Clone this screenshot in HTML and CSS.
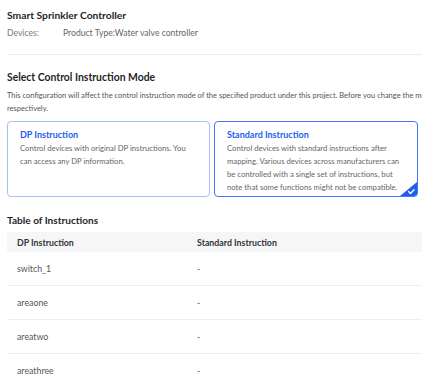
FILE: index.html
```html
<!DOCTYPE html>
<html lang="en">
<head>
<meta charset="utf-8">
<title>Smart Sprinkler Controller</title>
<link rel="stylesheet" href="styles.css">
</head>
<body>
<div class="page">
  <header class="head">
    <h1 class="title">Smart Sprinkler Controller</h1>
    <div class="meta">
      <span class="meta-label">Devices:</span>
      <span class="meta-value">Product Type:Water valve controller</span>
    </div>
  </header>

  <section class="mode">
    <h2 class="section-title">Select Control Instruction Mode</h2>
    <p class="desc"><span class="desc-line">This configuration will affect the control instruction mode of the specified product under this project. Before you change the mode, make sure to update the related configurations</span><br>respectively.</p>
    <div class="cards">
      <div class="card">
        <div class="card-title">DP Instruction</div>
        <div class="card-text">Control devices with original DP instructions. You can access any DP information.</div>
      </div>
      <div class="card card-active">
        <div class="card-title">Standard Instruction</div>
        <div class="card-text">Control devices with standard instructions after mapping. Various devices across manufacturers can be controlled with a single set of instructions, but note that some functions might not be compatible.</div>
        <svg class="corner" width="17" height="14" viewBox="0 0 17 14"><path d="M17 0 L17 14 L0 14 Z" fill="#1f5cf0"/><path d="M8.5 9.5 L10.5 11.5 L14 7.8" fill="none" stroke="#fff" stroke-width="1.4" stroke-linecap="round" stroke-linejoin="round"/></svg>
      </div>
    </div>
  </section>

  <section class="table-sec">
    <h2 class="table-title">Table of Instructions</h2>
    <div class="table">
      <div class="row row-head"><div class="c1">DP Instruction</div><div class="c2">Standard Instruction</div></div>
      <div class="row"><div class="c1">switch_1</div><div class="c2">-</div></div>
      <div class="row"><div class="c1">areaone</div><div class="c2">-</div></div>
      <div class="row"><div class="c1">areatwo</div><div class="c2">-</div></div>
      <div class="row"><div class="c1">areathree</div><div class="c2">-</div></div>
    </div>
  </section>
</div>
</body>
</html>
```

FILE: styles.css
```css
html, body {
  margin: 0;
  padding: 0;
  background: #fff;
  overflow: hidden;
}
body {
  font-family: Lato, "Open Sans", "Liberation Sans", sans-serif;
  color: #333;
}
.page {
  padding: 7px 0 0 7px;
  width: 440px;
}
.title {
  margin: 0;
  font-size: 10.3px;
  line-height: 16px;
  font-weight: 700;
  color: #1f1f1f;
}
.meta {
  margin-top: 3px;
  display: flex;
  font-size: 8.6px;
  line-height: 14px;
  color: #666;
}
.meta-label {
  width: 56px;
  color: #7a7a7a;
}
.head {
  padding-bottom: 14px;
  border-bottom: 1px solid #ececec;
}
.section-title {
  margin: 14px 0 0;
  font-size: 10.4px;
  line-height: 16px;
  font-weight: 700;
  color: #1f1f1f;
}
.desc {
  margin: 4px 0 0;
  font-size: 7.5px;
  line-height: 13px;
  color: #555;
}
.desc-line {
  display: inline-block;
  white-space: nowrap;
}
.cards {
  margin-top: 6px;
  width: 411px;
  display: grid;
  grid-template-columns: 203px 204px;
  gap: 4px;
}
.card {
  position: relative;
  border: 1px solid #a6befa;
  border-radius: 4px;
  padding: 6px 12px 2px 12px;
  overflow: hidden;
}
.card-active {
  border-color: #3f77f7;
}
.card-title {
  font-size: 9px;
  line-height: 14px;
  font-weight: 700;
  color: #1d5cf0;
}
.card-text {
  font-size: 7.7px;
  line-height: 13px;
  color: #666;
}
.corner {
  position: absolute;
  right: 0;
  bottom: 0;
  display: block;
}
.table-title {
  margin: 15px 0 4px;
  font-size: 10.1px;
  line-height: 16px;
  font-weight: 700;
  color: #1f1f1f;
}
.row {
  display: flex;
  align-items: center;
  height: 33px;
  border-bottom: 1px solid #efefef;
  font-size: 8.8px;
  color: #555;
}
.row-head {
  height: 20px;
  border-bottom: none;
  background: #f5f6f8;
  font-weight: 700;
  color: #333;
}
.c1 {
  width: 180px;
  padding-left: 10px;
}
.c2 {
  flex: 1;
}
```
